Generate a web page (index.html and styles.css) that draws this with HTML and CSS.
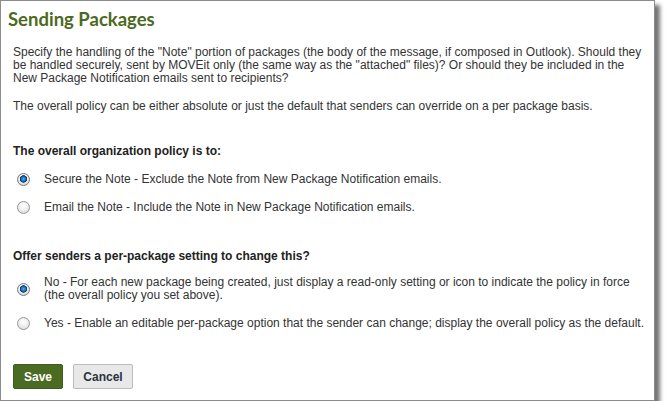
FILE: index.html
```html
<!DOCTYPE html>
<html>
<head>
<meta charset="utf-8">
<link rel="stylesheet" href="styles.css">
</head>
<body>
<div class="panel">
  <h1 class="title">Sending Packages</h1>
  <div class="content">
    <p class="intro">Specify the handling of the "Note" portion of packages (the body of the message, if composed in Outlook). Should they be handled securely, sent by MOVEit only (the same way as the "attached" files)? Or should they be included in the New Package Notification emails sent to recipients?</p>
    <p class="intro second">The overall policy can be either absolute or just the default that senders can override on a per package basis.</p>

    <h2 class="section first">The overall organization policy is to:</h2>
    <div class="options">
      <label class="option"><input type="radio" name="policy" class="radio" checked><span>Secure the Note - Exclude the Note from New Package Notification emails.</span></label>
      <label class="option"><input type="radio" name="policy" class="radio"><span>Email the Note - Include the Note in New Package Notification emails.</span></label>
    </div>

    <h2 class="section later">Offer senders a per-package setting to change this?</h2>
    <div class="options tight">
      <label class="option"><input type="radio" name="override" class="radio" checked><span>No - For each new package being created, just display a read-only setting or icon to indicate the policy in force (the overall policy you set above).</span></label>
      <label class="option"><input type="radio" name="override" class="radio"><span>Yes - Enable an editable per-package option that the sender can change; display the overall policy as the default.</span></label>
    </div>

    <div class="actions">
      <button class="btn btn-save">Save</button>
      <button class="btn btn-cancel">Cancel</button>
    </div>
  </div>
</div>
</body>
</html>
```

FILE: styles.css
```css
html, body {
  margin: 0;
  padding: 0;
  background: #ffffff;
}

body {
  font-family: "Liberation Sans", Arial, sans-serif;
  font-size: 12px;
  color: #333333;
}

.panel {
  width: 653px;
  height: 399px;
  border: 1px solid #8c8c8c;
  background: #ffffff;
  box-shadow: 5px 5px 4px rgba(0, 0, 0, 0.55);
  display: flex;
  flex-direction: column;
}

.title {
  margin: 0;
  padding: 7px 0 0 7px;
  font-family: Lato, "Open Sans", sans-serif;
  font-size: 18.5px;
  font-weight: bold;
  line-height: 22px;
  color: #4c6a1e;
}

.content {
  padding: 16px 4px 0 12px;
  display: flex;
  flex-direction: column;
}

.intro {
  margin: 0;
  line-height: 13px;
}

.intro.second {
  margin-top: 15px;
}

.section {
  margin: 0;
  font-size: 12px;
  font-weight: bold;
  line-height: 13px;
  color: #222222;
}

.section.first {
  margin-top: 32px;
}

.section.later {
  margin-top: 36px;
}

.options {
  display: flex;
  flex-direction: column;
  gap: 15px;
  margin-top: 15px;
}

.options.tight {
  margin-top: 13px;
}

.option {
  display: flex;
  align-items: center;
  gap: 14px;
  padding-left: 4px;
  line-height: 13px;
}

.radio {
  appearance: none;
  -webkit-appearance: none;
  flex: none;
  width: 13px;
  height: 13px;
  margin: 0;
  border-radius: 50%;
  border: 1px solid #959595;
  background: radial-gradient(circle at 50% 35%, #ffffff 0%, #f0f0f0 45%, #d2d2d2 100%);
  box-sizing: border-box;
}

.radio:checked {
  border-color: #7a7a7a;
  background:
    radial-gradient(circle at 50% 45%, #58b0f0 0px, #1d6cb8 2.2px, #0c3a6c 3.4px, transparent 4px),
    radial-gradient(circle at 50% 35%, #ffffff 0%, #eeeeee 45%, #cfcfcf 100%);
}

.actions {
  display: flex;
  gap: 10px;
  margin-top: 34px;
}

.btn {
  height: 25px;
  font-family: "Liberation Sans", Arial, sans-serif;
  font-size: 12px;
  font-weight: bold;
  border-radius: 2px;
  padding: 0;
}

.btn-save {
  width: 50px;
  background: #4b6b22;
  border: 1px solid #3f5c1b;
  color: #ffffff;
}

.btn-cancel {
  width: 60px;
  background: #e8e8e8;
  border: 1px solid #bcbcbc;
  color: #2a3340;
}
```
